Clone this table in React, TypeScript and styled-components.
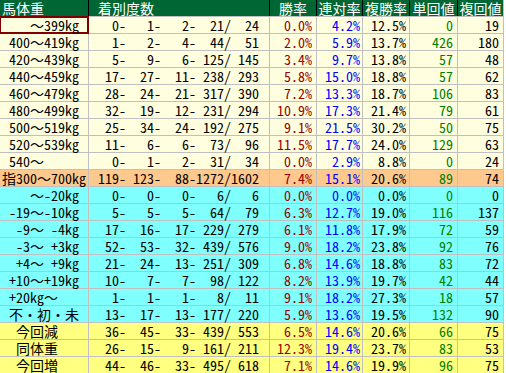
import React from 'react';
import styled, { createGlobalStyle } from 'styled-components';

type Band = 'light' | 'orange' | 'cyan' | 'yellow';

type Row = {
  label: string;
  counts: [number, number, number, number, number];
  win: string;
  ren: string;
  fuku: string;
  tan: string;
  fukuVal: string;
  band: Band;
};

const rows: Row[] = [
  { label: '    ～399kg', counts: [0, 1, 2, 21, 24], win: '0.0%', ren: '4.2%', fuku: '12.5%', tan: '0', fukuVal: '19', band: 'light' },
  { label: ' 400～419kg', counts: [1, 2, 4, 44, 51], win: '2.0%', ren: '5.9%', fuku: '13.7%', tan: '426', fukuVal: '180', band: 'light' },
  { label: ' 420～439kg', counts: [5, 9, 6, 125, 145], win: '3.4%', ren: '9.7%', fuku: '13.8%', tan: '57', fukuVal: '48', band: 'light' },
  { label: ' 440～459kg', counts: [17, 27, 11, 238, 293], win: '5.8%', ren: '15.0%', fuku: '18.8%', tan: '57', fukuVal: '62', band: 'light' },
  { label: ' 460～479kg', counts: [28, 24, 21, 317, 390], win: '7.2%', ren: '13.3%', fuku: '18.7%', tan: '106', fukuVal: '83', band: 'light' },
  { label: ' 480～499kg', counts: [32, 19, 12, 231, 294], win: '10.9%', ren: '17.3%', fuku: '21.4%', tan: '79', fukuVal: '61', band: 'light' },
  { label: ' 500～519kg', counts: [25, 34, 24, 192, 275], win: '9.1%', ren: '21.5%', fuku: '30.2%', tan: '50', fukuVal: '75', band: 'light' },
  { label: ' 520～539kg', counts: [11, 6, 6, 73, 96], win: '11.5%', ren: '17.7%', fuku: '24.0%', tan: '129', fukuVal: '63', band: 'light' },
  { label: ' 540～', counts: [0, 1, 2, 31, 34], win: '0.0%', ren: '2.9%', fuku: '8.8%', tan: '0', fukuVal: '24', band: 'light' },
  { label: '指300～700kg', counts: [119, 123, 88, 1272, 1602], win: '7.4%', ren: '15.1%', fuku: '20.6%', tan: '89', fukuVal: '74', band: 'orange' },
  { label: '    ～-20kg', counts: [0, 0, 0, 6, 6], win: '0.0%', ren: '0.0%', fuku: '0.0%', tan: '0', fukuVal: '0', band: 'cyan' },
  { label: ' -19～-10kg', counts: [5, 5, 5, 64, 79], win: '6.3%', ren: '12.7%', fuku: '19.0%', tan: '116', fukuVal: '137', band: 'cyan' },
  { label: '  -9～ -4kg', counts: [17, 16, 17, 229, 279], win: '6.1%', ren: '11.8%', fuku: '17.9%', tan: '72', fukuVal: '59', band: 'cyan' },
  { label: '  -3～ +3kg', counts: [52, 53, 32, 439, 576], win: '9.0%', ren: '18.2%', fuku: '23.8%', tan: '92', fukuVal: '76', band: 'cyan' },
  { label: '  +4～ +9kg', counts: [21, 24, 13, 251, 309], win: '6.8%', ren: '14.6%', fuku: '18.8%', tan: '83', fukuVal: '72', band: 'cyan' },
  { label: ' +10～+19kg', counts: [10, 7, 7, 98, 122], win: '8.2%', ren: '13.9%', fuku: '19.7%', tan: '42', fukuVal: '44', band: 'cyan' },
  { label: ' +20kg～', counts: [1, 1, 1, 8, 11], win: '9.1%', ren: '18.2%', fuku: '27.3%', tan: '18', fukuVal: '57', band: 'cyan' },
  { label: ' 不・初・未', counts: [13, 17, 13, 177, 220], win: '5.9%', ren: '13.6%', fuku: '19.5%', tan: '132', fukuVal: '90', band: 'cyan' },
  { label: '  今回減', counts: [36, 45, 33, 439, 553], win: '6.5%', ren: '14.6%', fuku: '20.6%', tan: '66', fukuVal: '75', band: 'yellow' },
  { label: '  同体重', counts: [26, 15, 9, 161, 211], win: '12.3%', ren: '19.4%', fuku: '23.7%', tan: '83', fukuVal: '53', band: 'yellow' },
  { label: '  今回増', counts: [44, 46, 33, 495, 618], win: '7.1%', ren: '14.6%', fuku: '19.9%', tan: '96', fukuVal: '75', band: 'yellow' },
];

const bandColors: Record<Band, string> = {
  light: '#ffffe0',
  orange: '#ffc88c',
  cyan: '#80ffff',
  yellow: '#ffff80',
};

const pad = (n: number) => String(n).padStart(4, ' ');
const countText = (c: Row['counts']) =>
  `${pad(c[0])}-${pad(c[1])}-${pad(c[2])}-${pad(c[3])}/${pad(c[4])}`;

const GlobalStyle = createGlobalStyle`
  html, body {
    margin: 0;
    padding: 0;
    background: #ffffff;
  }
  body {
    font-family: "Noto Sans Mono CJK JP", "Noto Sans CJK JP", monospace;
  }
`;

const Sheet = styled.div`
  display: flex;
  flex-direction: column;
  gap: 1px;
  width: 503px;
  background: #c0c0c0;
  border-right: 1px solid #c0c0c0;
  font-size: 14px;
  line-height: 16px;
`;

const Line = styled.div<{ $head?: boolean }>`
  display: grid;
  grid-template-columns: 88px 180px 46px 45px 46px 47px 45px;
  column-gap: 1px;
  height: 16px;
  background: ${({ $head }) => ($head ? '#000000' : '#c0c0c0')};
`;

const HeadCell = styled.div<{ $align?: 'left' | 'center' }>`
  background: #006633;
  color: #ffffff;
  text-align: ${({ $align }) => $align || 'center'};
  padding-left: ${({ $align }) => ($align === 'left' ? '2px' : '0')};
  white-space: pre;
`;

const Cell = styled.div<{ $bg: string; $color?: string; $text?: boolean; $padR?: number; $selected?: boolean }>`
  background: ${({ $bg }) => $bg};
  color: ${({ $color }) => $color || '#000000'};
  text-align: ${({ $text }) => ($text ? 'left' : 'right')};
  padding: ${({ $text, $padR }) => ($text ? '0 0 0 2px' : `0 ${$padR ?? 3}px 0 0`)};
  white-space: pre;
  box-shadow: ${({ $selected }) =>
    $selected ? '0 0 0 1px #800000, inset 0 0 0 1px #800000' : 'none'};
`;

export default function App() {
  return (
    <>
      <GlobalStyle />
      <Sheet>
        <Line $head>
          <HeadCell $align="left">馬体重</HeadCell>
          <HeadCell $align="left"> 着別度数</HeadCell>
          <HeadCell>勝率</HeadCell>
          <HeadCell>連対率</HeadCell>
          <HeadCell>複勝率</HeadCell>
          <HeadCell>単回値</HeadCell>
          <HeadCell>複回値</HeadCell>
        </Line>
        {rows.map((r, i) => {
          const bg = bandColors[r.band];
          return (
            <Line key={i}>
              <Cell $bg={bg} $text $selected={i === 0}>{r.label}</Cell>
              <Cell $bg={bg} $text>{countText(r.counts)}</Cell>
              <Cell $bg={bg} $color="#990000" $padR={4}>{r.win}</Cell>
              <Cell $bg={bg} $color="#0000ff" $padR={2}>{r.ren}</Cell>
              <Cell $bg={bg}>{r.fuku}</Cell>
              <Cell $bg={bg} $color="#008000" $padR={4}>{r.tan}</Cell>
              <Cell $bg={bg} $padR={4}>{r.fukuVal}</Cell>
            </Line>
          );
        })}
      </Sheet>
    </>
  );
}
